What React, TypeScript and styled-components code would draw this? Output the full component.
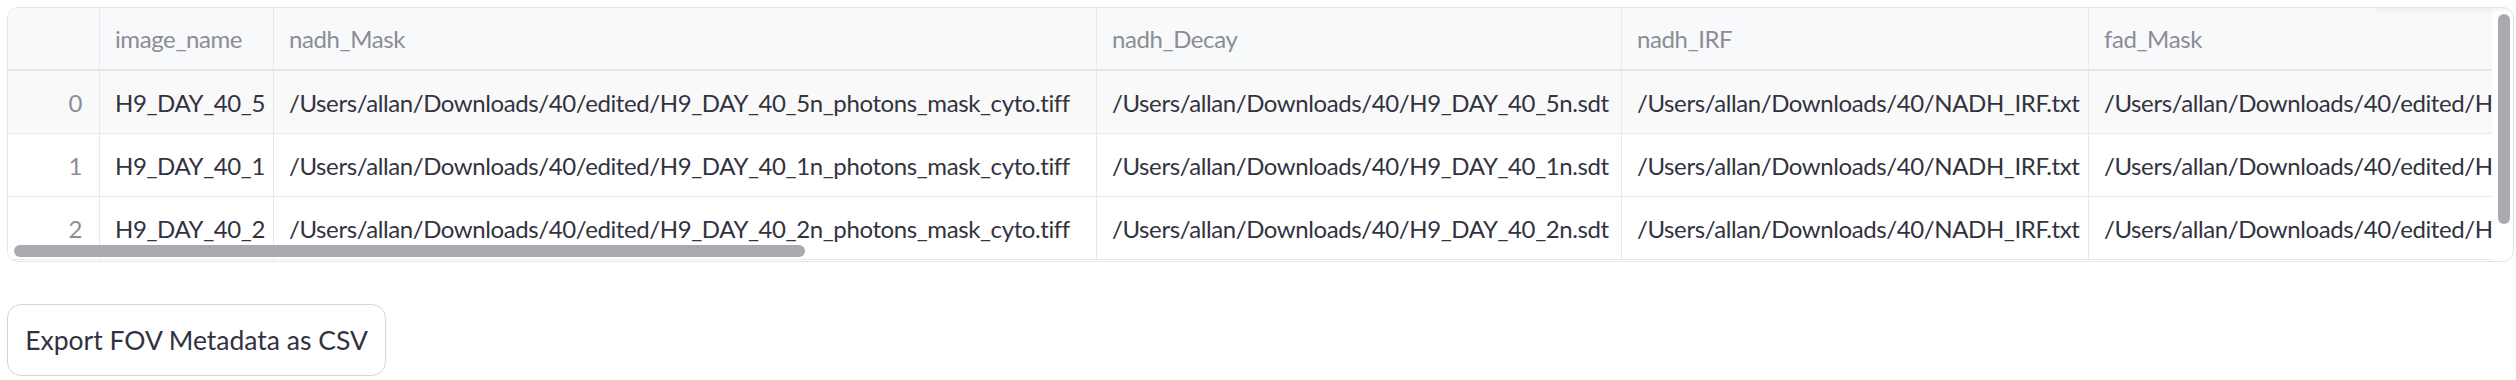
import React from "react";
import styled, { createGlobalStyle } from "styled-components";

const GlobalStyle = createGlobalStyle`
    html, body {
        margin: 0;
        padding: 0;
        background: #ffffff;
    }
    body {
        font-family: Lato, "Liberation Sans", sans-serif;
        color: #31333f;
    }
`;

// page wrapper
const Page = styled.main`
    display: flex;
    flex-direction: column;
    align-items: flex-start;
    gap: 42px;
    padding: 7px 0 0 7px;
    width: 2507px;
`;

// the grid frame, rounded with a thin border
const Frame = styled.section`
    position: relative;
    width: 100%;
    height: 255px;
    box-sizing: border-box;
    border: 1px solid #e4e6eb;
    border-radius: 11px;
    overflow: hidden;
    background: #ffffff;
`;

const Viewport = styled.div`
    width: calc(100% - 21px);
    height: 100%;
    overflow: hidden;
`;

const Grid = styled.div<{ $cols: string }>`
    display: grid;
    grid-template-columns: ${({ $cols }) => $cols};
    grid-auto-rows: 63px;
`;

const Cell = styled.div<{ $head?: boolean; $index?: boolean; $hover?: boolean }>`
    display: flex;
    align-items: center;
    justify-content: ${({ $index }) => ($index ? "flex-end" : "flex-start")};
    padding: 0 ${({ $index }) => ($index ? "17px" : "10px")} 0 15px;
    box-sizing: border-box;
    white-space: nowrap;
    overflow: hidden;
    font-size: 24px;
    letter-spacing: -0.4px;
    color: ${({ $head, $index }) => ($head || $index ? "#8b8d96" : "#31333f")};
    background: ${({ $head, $hover }) => ($head ? "#f8f9fb" : $hover ? "#f9f9fa" : "#ffffff")};
    border-right: 1px solid #e8e9ed;
    border-bottom: ${({ $head }) => ($head ? "2px solid #e4e6eb" : "1px solid #e8e9ed")};
`;

// overlay scroll thumbs
const HThumb = styled.div`
    position: absolute;
    left: 6px;
    top: 237px;
    width: 791px;
    height: 12px;
    border-radius: 6px;
    background: #a9a9ae;
`;

const VThumb = styled.div`
    position: absolute;
    right: 3px;
    top: 6px;
    width: 12px;
    height: 210px;
    border-radius: 6px;
    background: #a9a9ae;
`;

// faint shadow of the hidden toolbar at the top right
const ToolbarShadow = styled.div`
    position: absolute;
    top: -40px;
    right: 0;
    width: 140px;
    height: 40px;
    border-radius: 8px;
    box-shadow: 0 1px 6px rgba(0, 0, 0, 0.08);
    background: #ffffff;
`;

const ExportButton = styled.button`
    width: 379px;
    height: 72px;
    box-sizing: border-box;
    border: 1px solid #d6d6da;
    border-radius: 14px;
    background: #ffffff;
    font-family: Lato, "Liberation Sans", sans-serif;
    font-size: 26.5px;
    color: #31333f;
    cursor: pointer;
`;

const columns = ["image_name", "nadh_Mask", "nadh_Decay", "nadh_IRF", "fad_Mask"];
const widths = "92px 174px 823px 525px 467px 700px";

const rows = ["5", "1", "2"].map((n) => ({
    image_name: `H9_DAY_40_${n}`,
    nadh_Mask: `/Users/allan/Downloads/40/edited/H9_DAY_40_${n}n_photons_mask_cyto.tiff`,
    nadh_Decay: `/Users/allan/Downloads/40/H9_DAY_40_${n}n.sdt`,
    nadh_IRF: "/Users/allan/Downloads/40/NADH_IRF.txt",
    fad_Mask: `/Users/allan/Downloads/40/edited/H9_DAY_40_${n}f_photons_mask_cyto.tiff`,
}));

export default function App() {
    return (
        <>
            <GlobalStyle />
            <Page>
                <Frame>
                    <ToolbarShadow />
                    <Viewport>
                        <Grid $cols={widths}>
                            <Cell $head />
                            {columns.map((c) => (
                                <Cell $head key={c}>
                                    {c}
                                </Cell>
                            ))}
                            {rows.map((r, i) => (
                                <React.Fragment key={i}>
                                    <Cell $index $hover={i === 0}>
                                        {i}
                                    </Cell>
                                    {columns.map((c) => (
                                        <Cell key={c} $hover={i === 0}>
                                            {r[c as keyof typeof r]}
                                        </Cell>
                                    ))}
                                </React.Fragment>
                            ))}
                        </Grid>
                    </Viewport>
                    <HThumb />
                    <VThumb />
                </Frame>
                <ExportButton>Export FOV Metadata as CSV</ExportButton>
            </Page>
        </>
    );
}
